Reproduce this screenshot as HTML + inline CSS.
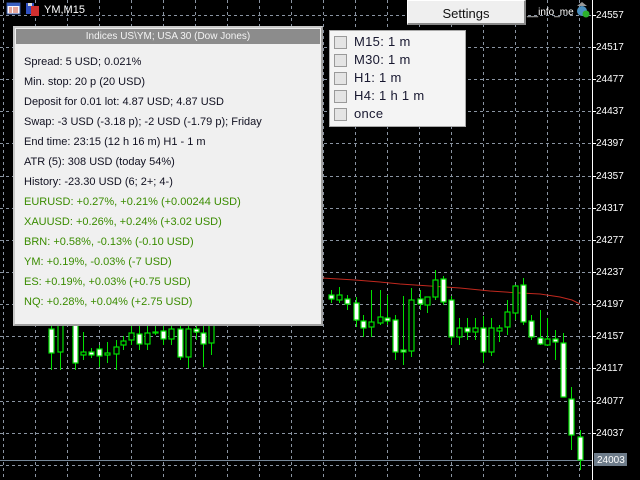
<!DOCTYPE html>
<html><head><meta charset="utf-8"><style>
body{margin:0;width:640px;height:480px;background:#000;overflow:hidden;position:relative;font-family:"Liberation Sans",Arial,sans-serif}
.ax{position:absolute;left:596px;color:#fff;font-size:10px}
#panel{position:absolute;left:13px;top:26px;width:306px;height:296px;background:#f0f0f0;border:2px solid #c8c8c8;border-right-color:#a0a0a0;border-bottom-color:#a0a0a0}
#title{height:15px;margin:1px 1px 0 1px;background:#8c8c8c;color:#f4f4f4;font-size:10px;text-align:center;line-height:15px}
.ln{position:absolute;left:9px;font-size:11px;color:#101020;white-space:nowrap}
.g{color:#3a8c00}
#sel{position:absolute;left:329px;top:30px;width:135px;height:95px;background:#f4f4f4;border:1px solid #a8a8a8}
.cb{position:absolute;left:4px;width:11px;height:11px;border:1px solid #9a9a9a;background:#e4e4e4}
.cl{position:absolute;left:24px;font-size:13px;color:#181830;letter-spacing:0.3px}
#set{position:absolute;left:407px;top:0;width:116px;height:22px;background:#efefef;border:1px solid #fff;border-right:2px solid #888;border-bottom:2px solid #888;text-align:center;line-height:26px;font-size:13px;color:#111}
</style></head><body>
<svg width="640" height="480" style="position:absolute;left:0;top:0">
<g stroke="#8a94a2" stroke-width="1" stroke-dasharray="3,3">
<line x1="0" y1="15.5" x2="592" y2="15.5"/><line x1="0" y1="47.5" x2="592" y2="47.5"/><line x1="0" y1="79.5" x2="592" y2="79.5"/><line x1="0" y1="111.5" x2="592" y2="111.5"/><line x1="0" y1="143.5" x2="592" y2="143.5"/><line x1="0" y1="176.5" x2="592" y2="176.5"/><line x1="0" y1="208.5" x2="592" y2="208.5"/><line x1="0" y1="240.5" x2="592" y2="240.5"/><line x1="0" y1="272.5" x2="592" y2="272.5"/><line x1="0" y1="304.5" x2="592" y2="304.5"/><line x1="0" y1="336.5" x2="592" y2="336.5"/><line x1="0" y1="368.5" x2="592" y2="368.5"/><line x1="0" y1="401.5" x2="592" y2="401.5"/><line x1="0" y1="433.5" x2="592" y2="433.5"/><line x1="0" y1="465.5" x2="592" y2="465.5"/>
<line x1="3.5" y1="0" x2="3.5" y2="480"/><line x1="35.5" y1="0" x2="35.5" y2="480"/><line x1="67.5" y1="0" x2="67.5" y2="480"/><line x1="99.5" y1="0" x2="99.5" y2="480"/><line x1="131.5" y1="0" x2="131.5" y2="480"/><line x1="163.5" y1="0" x2="163.5" y2="480"/><line x1="195.5" y1="0" x2="195.5" y2="480"/><line x1="227.5" y1="0" x2="227.5" y2="480"/><line x1="259.5" y1="0" x2="259.5" y2="480"/><line x1="291.5" y1="0" x2="291.5" y2="480"/><line x1="323.5" y1="0" x2="323.5" y2="480"/><line x1="355.5" y1="0" x2="355.5" y2="480"/><line x1="387.5" y1="0" x2="387.5" y2="480"/><line x1="419.5" y1="0" x2="419.5" y2="480"/><line x1="451.5" y1="0" x2="451.5" y2="480"/><line x1="483.5" y1="0" x2="483.5" y2="480"/><line x1="515.5" y1="0" x2="515.5" y2="480"/><line x1="547.5" y1="0" x2="547.5" y2="480"/><line x1="579.5" y1="0" x2="579.5" y2="480"/>
</g>
<line x1="0" y1="460.5" x2="592" y2="460.5" stroke="#778899"/>
<polyline fill="none" stroke="#c0281e" stroke-width="1" points="322,278 355,280 380,282 400,284 430,286 460,288 490,291 520,293 540,294 560,297 572,300 580,304"/>
<g stroke="#00e000" stroke-width="1">
<path d="M51.5 325V370M60.5 325V370M75.5 323V370M83.5 332V360M91.5 348V358M99.5 345V367M107.5 342V363M116.5 340V370M123.5 336V350M131.5 326V345M139.5 325V350M147.5 325V350M155.5 326V335M163.5 326V345M171.5 325V345M180.5 325V360M188.5 325V368M196.5 325V340M203.5 325V367M211.5 325V355M331.5 290V303M339.5 287V303M347.5 295V310M356.5 297V327M363.5 315V337M371.5 290V337M380.5 290V325M387.5 295V325M395.5 315V360M403.5 296V365M411.5 288V357M420.5 290V310M427.5 297V313M435.5 270V300M443.5 276V305M451.5 296V345M459.5 318V345M467.5 318V340M475.5 318V340M483.5 316V363M491.5 318V356M499.5 325V342M507.5 300V335M515.5 285V320M523.5 278V325M531.5 315V340M540.5 310V345M547.5 318V346M555.5 330V360M563.5 333V397M571.5 387V450M580.5 430V470"/>
</g>
<g stroke="#00e000" stroke-width="1.2">
<rect x="49" y="329" width="5" height="24" fill="#fff"/><rect x="58" y="325" width="5" height="27" fill="#000"/><rect x="73" y="323" width="5" height="40" fill="#fff"/><rect x="81" y="352" width="5" height="3" fill="#000"/><rect x="89" y="352" width="5" height="3" fill="#fff"/><rect x="97" y="349" width="5" height="7" fill="#fff"/><rect x="105" y="353" width="5" height="2" fill="#000"/><rect x="114" y="347" width="5" height="7" fill="#000"/><rect x="121" y="341" width="5" height="4" fill="#000"/><rect x="129" y="333" width="5" height="7" fill="#000"/><rect x="137" y="334" width="5" height="10" fill="#fff"/><rect x="145" y="333" width="5" height="11" fill="#000"/><rect x="153" y="332" width="5" height="1" fill="#000"/><rect x="161" y="331" width="5" height="8" fill="#fff"/><rect x="169" y="329" width="5" height="10" fill="#000"/><rect x="178" y="329" width="5" height="28" fill="#fff"/><rect x="186" y="329" width="5" height="28" fill="#000"/><rect x="194" y="329" width="5" height="3" fill="#fff"/><rect x="201" y="333" width="5" height="11" fill="#fff"/><rect x="209" y="325" width="5" height="18" fill="#000"/>
<rect x="329" y="295" width="5" height="4" fill="#fff"/><rect x="337" y="295" width="5" height="5" fill="#000"/><rect x="345" y="299" width="5" height="5" fill="#fff"/><rect x="354" y="303" width="5" height="17" fill="#fff"/><rect x="361" y="321" width="5" height="7" fill="#fff"/><rect x="369" y="322" width="5" height="5" fill="#000"/><rect x="378" y="317" width="5" height="6" fill="#000"/><rect x="385" y="318" width="5" height="3" fill="#fff"/><rect x="393" y="320" width="5" height="32" fill="#fff"/><rect x="401" y="350" width="5" height="2" fill="#fff"/><rect x="409" y="300" width="5" height="51" fill="#000"/><rect x="418" y="299" width="5" height="5" fill="#fff"/><rect x="425" y="297" width="5" height="8" fill="#000"/><rect x="433" y="280" width="5" height="17" fill="#000"/><rect x="441" y="279" width="5" height="23" fill="#fff"/><rect x="449" y="300" width="5" height="37" fill="#fff"/><rect x="457" y="328" width="5" height="9" fill="#000"/><rect x="465" y="328" width="5" height="4" fill="#fff"/><rect x="473" y="328" width="5" height="4" fill="#000"/><rect x="481" y="328" width="5" height="24" fill="#fff"/><rect x="489" y="328" width="5" height="24" fill="#000"/><rect x="497" y="328" width="5" height="3" fill="#000"/><rect x="505" y="312" width="5" height="15" fill="#000"/><rect x="513" y="286" width="5" height="27" fill="#000"/><rect x="521" y="285" width="5" height="37" fill="#fff"/><rect x="529" y="321" width="5" height="16" fill="#fff"/><rect x="538" y="338" width="5" height="6" fill="#fff"/><rect x="545" y="339" width="5" height="6" fill="#000"/><rect x="553" y="339" width="5" height="3" fill="#fff"/><rect x="561" y="343" width="5" height="54" fill="#fff"/><rect x="569" y="399" width="5" height="36" fill="#fff"/><rect x="578" y="437" width="5" height="23" fill="#fff"/>
</g>
<line x1="592.5" y1="0" x2="592.5" y2="480" stroke="#fff"/>
<g stroke="#fff"><path d="M592 15.5h4M592 47.5h4M592 79.5h4M592 111.5h4M592 143.5h4M592 176.5h4M592 208.5h4M592 240.5h4M592 272.5h4M592 304.5h4M592 336.5h4M592 368.5h4M592 401.5h4M592 433.5h4"/></g>
<rect x="594" y="453" width="33" height="13" fill="#6e7c8a"/>
<text x="597" y="463" font-size="10" fill="#fff" font-family="Liberation Sans">24003</text>
<rect x="7" y="3" width="13" height="11" fill="#f8f8ff" stroke="#3050a0"/><rect x="7" y="3" width="13" height="3" fill="#3a60c0"/><path d="M9 8h3M13 8h5M9 10h3M13 10h5M9 12h3M13 12h5" stroke="#d05030"/>
<rect x="26" y="3" width="8" height="11" fill="#3050c0"/><rect x="31" y="6" width="8" height="10" fill="#d03030"/><rect x="28" y="3" width="4" height="3" fill="#ddd"/>
<circle cx="582" cy="11" r="5" fill="#4a90c0"/><circle cx="586" cy="14" r="3.5" fill="#2cb02c"/><path d="M577 6l5-4 5 4z" fill="#999"/>
<text x="527" y="15" font-size="10" fill="#fff" font-family="Liberation Sans">__info_me</text>
<text x="44" y="13" font-size="11" fill="#fff" font-family="Liberation Sans">YM,M15</text>
</svg>
<div class="ax" style="top:10px">24557</div><div class="ax" style="top:42px">24517</div><div class="ax" style="top:74px">24477</div><div class="ax" style="top:106px">24437</div><div class="ax" style="top:138px">24397</div><div class="ax" style="top:171px">24357</div><div class="ax" style="top:203px">24317</div><div class="ax" style="top:235px">24277</div><div class="ax" style="top:267px">24237</div><div class="ax" style="top:299px">24197</div><div class="ax" style="top:331px">24157</div><div class="ax" style="top:363px">24117</div><div class="ax" style="top:396px">24077</div><div class="ax" style="top:428px">24037</div>
<div id="set">Settings</div>
<div id="panel"><div id="title">Indices US\YM; USA 30 (Dow Jones)</div>
<div class="ln" style="top:28px">Spread: 5 USD; 0.021%</div>
<div class="ln" style="top:48px">Min. stop: 20 p (20 USD)</div>
<div class="ln" style="top:68px">Deposit for 0.01 lot: 4.87 USD; 4.87 USD</div>
<div class="ln" style="top:88px">Swap: -3 USD (-3.18 p); -2 USD (-1.79 p); Friday</div>
<div class="ln" style="top:108px">End time: 23:15 (12 h 16 m) H1 - 1 m</div>
<div class="ln" style="top:128px">ATR (5): 308 USD (today 54%)</div>
<div class="ln" style="top:148px">History: -23.30 USD (6; 2+; 4-)</div>
<div class="ln g" style="top:168px">EURUSD: +0.27%, +0.21% (+0.00244 USD)</div>
<div class="ln g" style="top:188px">XAUUSD: +0.26%, +0.24% (+3.02 USD)</div>
<div class="ln g" style="top:208px">BRN: +0.58%, -0.13% (-0.10 USD)</div>
<div class="ln g" style="top:228px">YM: +0.19%, -0.03% (-7 USD)</div>
<div class="ln g" style="top:248px">ES: +0.19%, +0.03% (+0.75 USD)</div>
<div class="ln g" style="top:268px">NQ: +0.28%, +0.04% (+2.75 USD)</div>
</div>
<div id="sel">
<div class="cb" style="top:5px"></div><div class="cl" style="top:3px">M15: 1 m</div>
<div class="cb" style="top:23px"></div><div class="cl" style="top:21px">M30: 1 m</div>
<div class="cb" style="top:41px"></div><div class="cl" style="top:39px">H1: 1 m</div>
<div class="cb" style="top:59px"></div><div class="cl" style="top:57px">H4: 1 h 1 m</div>
<div class="cb" style="top:77px"></div><div class="cl" style="top:75px">once</div>
</div>
</body></html>
